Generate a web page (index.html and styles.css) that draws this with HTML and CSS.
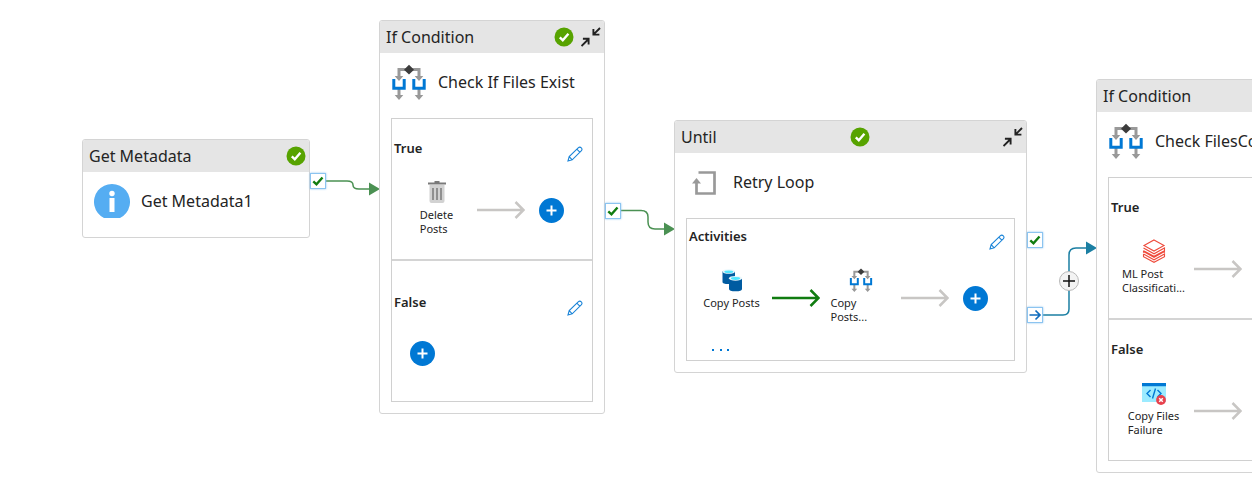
FILE: index.html
```html
<!DOCTYPE html>
<html lang="en">
<head>
<meta charset="utf-8">
<title>Pipeline</title>
<link rel="stylesheet" href="styles.css">
</head>
<body>
<svg class="defs" aria-hidden="true">
  <symbol id="ok" viewBox="0 0 20 20"><circle cx="10" cy="10" r="9.5" fill="#57a300"/><path d="M5.8 10.3l3 3L14.4 6.8" fill="none" stroke="#fff" stroke-width="2.4"/></symbol>
  <symbol id="collapse" viewBox="0 0 20 20"><path d="M19 1L12.600 7.400M12.400 2V7.600H18.400M.500 19L7.100 12.500M1.900 11.800H7.600V17.500" fill="none" stroke="#222" stroke-width="1.900"/></symbol>
  <symbol id="branch" viewBox="0 0 36 36"><path d="M8 15V5.5H28V15M8 24V32M28 24V32" fill="none" stroke="#999" stroke-width="3"/><path d="M3.7 12H12.3L8 17ZM23.7 12H32.3L28 17ZM3.7 31H12.3L8 36ZM23.7 31H32.3L28 36Z" fill="#999"/><path d="M2.8 15V24.3H13.2V15M22.8 15V24.3H33.2V15" fill="none" stroke="#0078d4" stroke-width="3"/><path d="M18 .8L23 5.7L18 10.4L13 5.7Z" fill="#3c3c3c"/></symbol>
  <symbol id="pencil" viewBox="0 0 16 16"><path d="M1 15L2.2 10.6L11.2 1.8Q12.8.4 14.3 1.8T14.2 4.9L5.2 13.8ZM2.2 10.6L5.2 13.8M9.8 3.2L12.8 6.2" fill="none" stroke="#1a84d8" stroke-width="1.100"/></symbol>
  <symbol id="arrow" viewBox="0 0 48 20"><path d="M0 10H46M38.500 2L46.500 10L38.500 18" fill="none" stroke="currentColor" stroke-width="2.5"/></symbol>
  <symbol id="plus" viewBox="0 0 25 25"><circle cx="12.500" cy="12.500" r="12.500" fill="#0078d4"/><path d="M12.500 7.500V17.500M7.500 12.500H17.500" stroke="#fff" stroke-width="2"/></symbol>
  <symbol id="tick" viewBox="0 0 14 14"><path d="M2.300 7.300L5.500 10.300L11.500 3.500" fill="none" stroke="#107c10" stroke-width="2.400"/></symbol>
</svg>

<main class="canvas">
  <svg class="links" aria-hidden="true">
    <g fill="none" stroke="#4b9153" stroke-width="1.500">
      <path d="M326 181H347Q353 181 353 185T359 189H370"/>
      <path d="M621 210.500H641Q648 210.500 648 217V222Q648 229 655 229H665"/>
      <path stroke="#1b7fa3" d="M1043 315H1063Q1069 315 1069 309V255Q1069 248 1076 248H1087"/>
    </g>
    <path fill="#4b9153" d="M369 182.500V195.500L380 189ZM664 222.500V235.500L675 229Z"/>
    <path fill="#1b7fa3" d="M1086 241.500V254.500L1097 248Z"/>
  </svg>

  <section class="node node-metadata">
    <header class="node-bar"><span>Get Metadata</span><svg class="status"><use href="#ok"/></svg></header>
    <div class="node-title">
      <svg class="kind" viewBox="0 0 36 36"><path d="M10 35A18 18 0 1 1 26 35Z" fill="#55adf2"/><circle cx="18" cy="10.500" r="2.700" fill="#fff"/><path d="M15.500 15H20.500V29H15.500Z" fill="#fff"/></svg>
      <span>Get Metadata1</span>
    </div>
  </section>

  <section class="node node-check">
    <header class="node-bar"><span>If Condition</span><div class="bar-tools"><svg class="status"><use href="#ok"/></svg><button class="icon-btn" aria-label="Collapse"><svg class="size-20"><use href="#collapse"/></svg></button></div></header>
    <div class="node-title"><svg class="kind"><use href="#branch"/></svg><span>Check If Files Exist</span></div>
    <div class="panel">
      <div class="branch">
        <div class="branch-head"><span>True</span><button class="icon-btn edit" aria-label="Edit true activities"><svg class="size-16"><use href="#pencil"/></svg></button></div>
        <div class="flow">
          <div class="activity"><svg class="size-24" viewBox="0 0 24 24"><path d="M4.500 5H19.500V21Q19.500 23 17.500 23H6.500Q4.500 23 4.500 21Z" fill="#d2d2d2"/><path d="M3 2.500H9.500V1H14.500V2.500H21V4.500H3Z" fill="#7a7a7a"/><path d="M8 8V20M12 8V20M16 8V20" stroke="#7a7a7a" stroke-width="1.500"/></svg><span>Delete<br>Posts</span></div>
          <svg class="arrow"><use href="#arrow"/></svg>
          <button class="icon-btn add" aria-label="Add activity"><svg class="size-25"><use href="#plus"/></svg></button>
        </div>
      </div>
      <div class="branch branch-empty">
        <div class="branch-head"><span>False</span><button class="icon-btn edit" aria-label="Edit false activities"><svg class="size-16"><use href="#pencil"/></svg></button></div>
        <div class="flow"><button class="icon-btn add" aria-label="Add activity"><svg class="size-25"><use href="#plus"/></svg></button></div>
      </div>
    </div>
  </section>

  <section class="node node-until">
    <header class="node-bar"><span>Until</span><svg class="status"><use href="#ok"/></svg><button class="icon-btn" aria-label="Collapse"><svg class="size-20"><use href="#collapse"/></svg></button></header>
    <div class="node-title">
      <svg class="kind" viewBox="0 0 36 36"><path d="M12.500 8.500H28.500V29.500H10.500V18" fill="none" stroke="#999" stroke-width="2.700"/><path d="M6 19.500L10.500 14L15 19.500Z" fill="#999"/></svg>
      <span>Retry Loop</span>
    </div>
    <div class="panel">
      <div class="branch branch-loop">
        <div class="branch-head"><span>Activities</span><button class="icon-btn edit" aria-label="Edit loop activities"><svg class="size-16"><use href="#pencil"/></svg></button></div>
        <div class="flow">
          <div class="activity"><svg class="size-24" viewBox="0 0 24 24"><path d="M2.500 3V14Q2.500 16 8.500 16T15 14V3Z" fill="#005ba1"/><ellipse cx="8.750" cy="3.500" rx="6.250" ry="2.300" fill="#e8f7fc"/><ellipse cx="8.750" cy="3.700" rx="4.500" ry="1.300" fill="#50e6ff"/><path d="M9 10V21Q9 23.300 15.500 23.300T22 21V10Z" fill="#005ba1"/><ellipse cx="15.500" cy="10.300" rx="6.500" ry="2.400" fill="#e8f7fc"/><ellipse cx="15.500" cy="10.500" rx="4.600" ry="1.400" fill="#50e6ff"/></svg><span>Copy Posts</span></div>
          <svg class="arrow arrow-done"><use href="#arrow"/></svg>
          <div class="activity activity-wide"><svg class="size-24"><use href="#branch"/></svg><span>Copy<br>Posts...</span></div>
          <svg class="arrow"><use href="#arrow"/></svg>
          <button class="icon-btn add" aria-label="Add activity"><svg class="size-25"><use href="#plus"/></svg></button>
        </div>
        <button class="icon-btn more" aria-label="More activities"><svg class="size-20" viewBox="0 0 20 20"><path d="M1 9H3V11H1ZM9 9H11V11H9ZM16 9H18V11H16Z" fill="#0078d4"/></svg></button>
      </div>
    </div>
  </section>

  <section class="node node-files">
    <header class="node-bar"><span>If Condition</span><div class="bar-tools"><svg class="status"><use href="#ok"/></svg><button class="icon-btn" aria-label="Collapse"><svg class="size-20"><use href="#collapse"/></svg></button></div></header>
    <div class="node-title"><svg class="kind"><use href="#branch"/></svg><span>Check FilesCo</span></div>
    <div class="panel">
      <div class="branch">
        <div class="branch-head"><span>True</span></div>
        <div class="flow">
          <div class="activity"><svg class="size-24" viewBox="0 0 24 24"><path d="M12 1L22 6.500L12 12L2 6.500ZM1.500 9L12 14.800L22.500 9V11.700L12 17.300L1.500 11.700M1.500 13.700V12.500L12 18.300L22.500 12.500V13.700M1.500 15V17.700L12 23.300L22.500 17.700V15L12 20.800L1.500 15" fill="none" stroke="#ef4b3c" stroke-width="1.100"/></svg><span>ML Post<br>Classificati...</span></div>
          <svg class="arrow"><use href="#arrow"/></svg>
        </div>
      </div>
      <div class="branch">
        <div class="branch-head"><span>False</span></div>
        <div class="flow">
          <div class="activity"><svg class="size-24" viewBox="0 0 24 24"><path d="M0 2H24V21H0Z" fill="#9cebff"/><path d="M0 2H24V5.300H0Z" fill="#0078d4"/><path d="M8.500 9L5 12.500L8.500 16M13.500 7.500L10.500 17.500M15.500 9L19 12.500L15.500 16" fill="none" stroke="#0078d4" stroke-width="1.400"/><circle cx="19" cy="19" r="4.900" fill="#e8414d"/><path d="M17.200 17.200L20.800 20.800M20.800 17.200L17.200 20.800" stroke="#fff" stroke-width="1.500"/></svg><span>Copy Files<br>Failure</span></div>
          <svg class="arrow"><use href="#arrow"/></svg>
        </div>
      </div>
    </div>
  </section>

  <button class="port port-metadata" aria-label="On success"><svg class="size-14"><use href="#tick"/></svg></button>
  <button class="port port-check" aria-label="On success"><svg class="size-14"><use href="#tick"/></svg></button>
  <button class="port port-until" aria-label="On success"><svg class="size-14"><use href="#tick"/></svg></button>
  <button class="port port-completion" aria-label="On completion"><svg class="size-14" viewBox="0 0 14 14"><path d="M1.500 7H12M7.500 2.500L12 7L7.500 11.500" fill="none" stroke="#0f6cbd" stroke-width="1.700"/></svg></button>
  <button class="insert" aria-label="Insert activity"><svg class="size-14" viewBox="0 0 14 14"><path d="M7 1V13M1 7H13" stroke="#111" stroke-width="1.500"/></svg></button>
</main>
</body>
</html>
```
FILE: styles.css
```css
* { box-sizing: border-box; }
body {
  margin: 0;
  background: #fff;
  color: #242424;
  font-family: "Noto Sans", "Open Sans", sans-serif;
  font-size: 16px;
}
svg { display: block; flex: none; }
.defs { position: absolute; width: 0; height: 0; }
.canvas { position: relative; min-height: 100vh; overflow: hidden; }
.links { position: absolute; inset: 0; width: 100%; height: 100%; overflow: visible; }

.size-14 { width: 14px; height: 14px; }
.size-16 { width: 16px; height: 16px; }
.size-20 { width: 20px; height: 20px; }
.size-24 { width: 24px; height: 24px; }
.size-25 { width: 25px; height: 25px; }
.status { width: 20px; height: 20px; }
.kind { width: 36px; height: 36px; }

.icon-btn { display: block; padding: 0; border: 0; background: none; cursor: pointer; }

/* Activities placed on the free canvas */
.node {
  position: absolute;
  border: 1px solid #d4d4d4;
  border-radius: 3px;
  background: #fff;
  overflow: hidden;
}
.node-metadata { left: 82px; top: 139px; width: 228px; }
.node-check { left: 379px; top: 20px; width: 226px; }
.node-until { left: 674px; top: 120px; width: 353px; }
.node-files { left: 1096px; top: 79px; width: 226px; }

.node-bar {
  display: flex;
  align-items: center;
  justify-content: space-between;
  height: 32px;
  padding: 0 3px 0 6px;
  background: #e5e5e5;
}
.bar-tools { display: flex; align-items: center; gap: 7px; }
.node-title {
  display: flex;
  align-items: center;
  gap: 11px;
  padding: 11px 11px 18px;
  line-height: 36px;
  white-space: nowrap;
}

.panel { margin: 0 11px 11px; border: 1px solid #d0d0d0; }
.branch { min-height: 140px; padding: 21px 9px 19px 2px; }
.branch + .branch { min-height: 142px; border-top: 2px solid #d4d4d4; }
.branch-empty { padding-top: 33px; }
.branch-loop { padding-top: 9px; padding-bottom: 0; }
.branch-head {
  display: flex;
  align-items: flex-start;
  justify-content: space-between;
  height: 24px;
  font-size: 13px;
  font-weight: 600;
  line-height: 17px;
}
.edit { margin-top: 6px; }
.flow { display: flex; align-items: center; min-height: 38px; margin-top: 16px; padding-left: 2px; }
.activity {
  display: flex;
  flex-direction: column;
  align-items: center;
  gap: 4px;
  width: 81px;
  min-height: 60px;
  font-size: 11px;
  line-height: 14px;
  white-space: nowrap;
}
.activity-wide span { width: 60px; }
.arrow { width: 48px; height: 20px; color: #c8c6c4; }
.arrow-done { color: #107c10; }
.add { margin-left: 14px; }
.more { margin: 12px 0 0 22px; }

/* Connection points lying over node edges and links */
.port {
  position: absolute;
  padding: 0;
  border: 1px solid #8cc4f0;
  background: #fff;
  box-shadow: 0 0 2px #8cc4f0;
}
.port-metadata { left: 310px; top: 173px; }
.port-check { left: 605px; top: 203px; }
.port-until { left: 1027px; top: 232px; }
.port-completion { left: 1027px; top: 307px; }
.insert {
  position: absolute;
  left: 1059px;
  top: 271px;
  padding: 2px;
  border: 1px solid #b8b8b8;
  border-radius: 50%;
  background: #f3f3f3;
}
```
